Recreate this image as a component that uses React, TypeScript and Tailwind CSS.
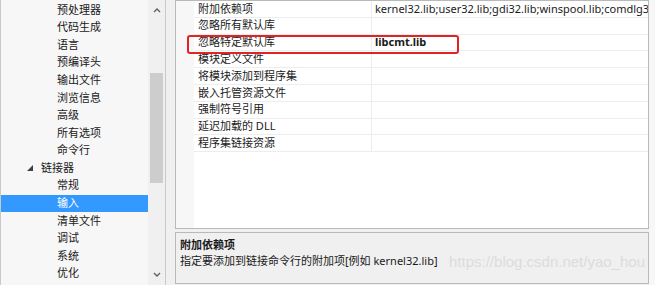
import React from "react";

const treeItems: { label: string; level: number; selected?: boolean; expanded?: boolean }[] = [
  { label: "预处理器", level: 2 },
  { label: "代码生成", level: 2 },
  { label: "语言", level: 2 },
  { label: "预编译头", level: 2 },
  { label: "输出文件", level: 2 },
  { label: "浏览信息", level: 2 },
  { label: "高级", level: 2 },
  { label: "所有选项", level: 2 },
  { label: "命令行", level: 2 },
  { label: "链接器", level: 1, expanded: true },
  { label: "常规", level: 2 },
  { label: "输入", level: 2, selected: true },
  { label: "清单文件", level: 2 },
  { label: "调试", level: 2 },
  { label: "系统", level: 2 },
  { label: "优化", level: 2 },
];

const props: { name: string; value?: string; bold?: boolean }[] = [
  { name: "附加依赖项", value: "kernel32.lib;user32.lib;gdi32.lib;winspool.lib;comdlg32.lib;advapi32.lib" },
  { name: "忽略所有默认库" },
  { name: "忽略特定默认库", value: "libcmt.lib", bold: true },
  { name: "模块定义文件" },
  { name: "将模块添加到程序集" },
  { name: "嵌入托管资源文件" },
  { name: "强制符号引用" },
  { name: "延迟加载的 DLL" },
  { name: "程序集链接资源" },
];

const font = "font-['Segoe_UI','Noto_Sans','Noto_Sans_CJK_SC',sans-serif]";

export default function App() {
  return (
    <div className={`w-[655px] h-[285px] flex bg-[#f0f0f0] text-[11px] text-[#1a1a1a] overflow-hidden ${font}`}>
      {/* Left tree panel */}
      <div className="w-[166px] shrink-0 h-[285px] flex border-l border-r border-[#c9c9c9] bg-[#f7f7f7]">
        <div className="w-[147px] shrink-0 pt-[1px]">
          {treeItems.map((it) => (
            <div
              key={it.label}
              className={`h-[17.6px] flex items-center ${it.selected ? "bg-[#3399ff] text-white" : ""}`}
            >
              {it.level === 1 ? (
                <div className="flex items-center pl-[26px]">
                  <svg width="8" height="8" viewBox="0 0 8 8" className="mr-[6px]">
                    <path d="M6 1 L6 7 L0 7 Z" fill="#404040" />
                  </svg>
                  <span>{it.label}</span>
                </div>
              ) : (
                <span className="pl-[56px]">{it.label}</span>
              )}
            </div>
          ))}
        </div>
        <div className="w-[17px] shrink-0 h-full flex flex-col items-center bg-[#f0f0f0]">
          <div className="h-[20px] flex items-center justify-center">
            <svg width="8" height="6" viewBox="0 0 8 6">
              <path d="M1 5 L4 2 L7 5" stroke="#606060" strokeWidth="1.4" fill="none" />
            </svg>
          </div>
          <div className="mt-[53px] w-[13px] h-[110px] bg-[#cdcdcd]" />
          <div className="flex-1" />
          <div className="h-[20px] flex items-center justify-center">
            <svg width="8" height="6" viewBox="0 0 8 6">
              <path d="M1 1 L4 4 L7 1" stroke="#606060" strokeWidth="1.4" fill="none" />
            </svg>
          </div>
        </div>
      </div>

      {/* Right panel */}
      <div className="ml-[9px] w-[474px] shrink-0 flex flex-col">
        <div className="relative h-[229px] border border-[#b9b9b9] bg-white flex overflow-hidden">
          <div className="w-[18px] shrink-0 bg-[#f7f7f7]" />
          <div className="flex-1 min-w-0 flex flex-col">
            {props.map((p) => (
              <div key={p.name} className="h-[16.8px] flex border-b border-[#ededed]">
                <div className="w-[178px] shrink-0 pl-[4px] flex items-center border-r border-[#ededed] whitespace-nowrap">
                  {p.name}
                </div>
                <div
                  className={`flex-1 min-w-0 pl-[3px] flex items-center whitespace-nowrap overflow-hidden ${
                    p.bold ? "font-bold" : ""
                  }`}
                >
                  {p.value ?? ""}
                </div>
              </div>
            ))}
          </div>
          <div className="absolute left-[11px] top-[34px] w-[272px] h-[19px] border-2 border-[#e02424] rounded-[3px]" />
        </div>
        <div className="mt-[3px] h-[52px] border border-[#b9b9b9] bg-[#f0f0f0] px-[4px] pt-[4px] relative">
          <div className="font-bold leading-[16px]">附加依赖项</div>
          <div className="leading-[16px]">指定要添加到链接命令行的附加项[例如 kernel32.lib]</div>
          <div className="absolute right-[3px] top-[18px] text-[15px] text-[#dcdcdc] font-['Liberation_Sans',sans-serif]">
            https://blog.csdn.net/yao_hou
          </div>
        </div>
      </div>
      <div className="flex-1 bg-[#f7f7f7]" />
    </div>
  );
}
